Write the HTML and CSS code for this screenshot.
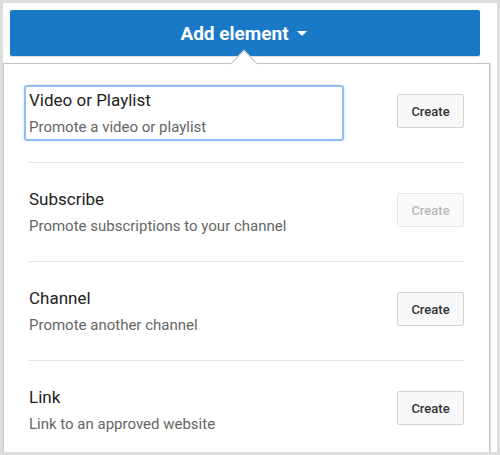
FILE: index.html
```html
<!DOCTYPE html>
<html>
<head>
<meta charset="utf-8">
<link rel="stylesheet" href="styles.css">
</head>
<body>
<div class="frame">
  <button class="add-btn">Add element <svg class="caret" width="10" height="5" viewBox="0 0 10 5"><path d="M0 0h10L5 5z" fill="#fff"/></svg></button>
  <div class="panel">
    <div class="notch"></div>
    <div class="row">
      <div class="info focused">
        <div class="title">Video or Playlist</div>
        <div class="sub">Promote a video or playlist</div>
      </div>
      <button class="create">Create</button>
    </div>
    <div class="row">
      <div class="info">
        <div class="title">Subscribe</div>
        <div class="sub">Promote subscriptions to your channel</div>
      </div>
      <button class="create disabled">Create</button>
    </div>
    <div class="row">
      <div class="info">
        <div class="title">Channel</div>
        <div class="sub">Promote another channel</div>
      </div>
      <button class="create">Create</button>
    </div>
    <div class="row">
      <div class="info">
        <div class="title">Link</div>
        <div class="sub">Link to an approved website</div>
      </div>
      <button class="create">Create</button>
    </div>
  </div>
</div>
</body>
</html>
```

FILE: styles.css
```css
html, body {
  margin: 0;
  padding: 0;
  background: #dddddd;
}
body {
  padding: 3px;
  font-family: Roboto, "Liberation Sans", sans-serif;
}
.frame {
  width: 494px;
  height: 449px;
  background: #ffffff;
  overflow: hidden;
  display: flex;
  flex-direction: column;
}
.add-btn {
  margin: 7px 0 0 7px;
  width: 470px;
  height: 46px;
  flex: 0 0 46px;
  background: #1a79c7;
  border: none;
  border-radius: 2px;
  color: #fff;
  font-family: Roboto, "Liberation Sans", sans-serif;
  font-weight: 700;
  font-size: 19px;
  display: flex;
  align-items: center;
  justify-content: center;
  gap: 8px;
  padding: 0 3px 0 0;
  box-shadow: 0 1px 1px rgba(0,0,0,0.15);
}
.caret {
  display: block;
  margin-top: 1px;
}
.panel {
  position: relative;
  margin-top: 7px;
  flex: 1 0 auto;
  border: 1px solid #c4c4c4;
  border-bottom: none;
  box-shadow: 1px 0 1px rgba(0,0,0,0.12);
  padding: 0 25px 0 24px;
  box-sizing: border-box;
  width: 487px;
}
.notch {
  position: absolute;
  left: 230px;
  top: -10px;
  width: 19px;
  height: 19px;
  background: #fff;
  border-top: 1px solid #c4c4c4;
  border-left: 1px solid #c4c4c4;
  transform: rotate(45deg);
}
.row {
  display: flex;
  justify-content: space-between;
  align-items: flex-start;
  padding: 21px 0 21px 0;
  border-bottom: 1px solid #e4e4e4;
  position: relative;
}
.info {
  width: 320px;
  margin-left: -4px;
  padding: 2px 0 1px 3px;
  border: 2px solid transparent;
  border-radius: 3px;
  box-sizing: border-box;
  height: 56px;
}
.info.focused {
  border-color: #93c0f4;
  box-shadow: 0 0 2px rgba(110,165,235,0.6);
}
.title {
  font-size: 17px;
  line-height: 22px;
  color: #222222;
}
.sub {
  margin-top: 5px;
  font-size: 15px;
  line-height: 22px;
  color: #666666;
  white-space: nowrap;
}
.create {
  margin-top: 9px;
  width: 67px;
  height: 34px;
  background: #f8f8f8;
  border: 1px solid #d3d3d3;
  border-radius: 2px;
  font-family: Roboto, "Liberation Sans", sans-serif;
  font-weight: 500;
  font-size: 13px;
  color: #333333;
  padding: 0;
}
.create.disabled {
  color: #b8b8b8;
  border-color: #e6e6e6;
  background: #fafafa;
}
```
